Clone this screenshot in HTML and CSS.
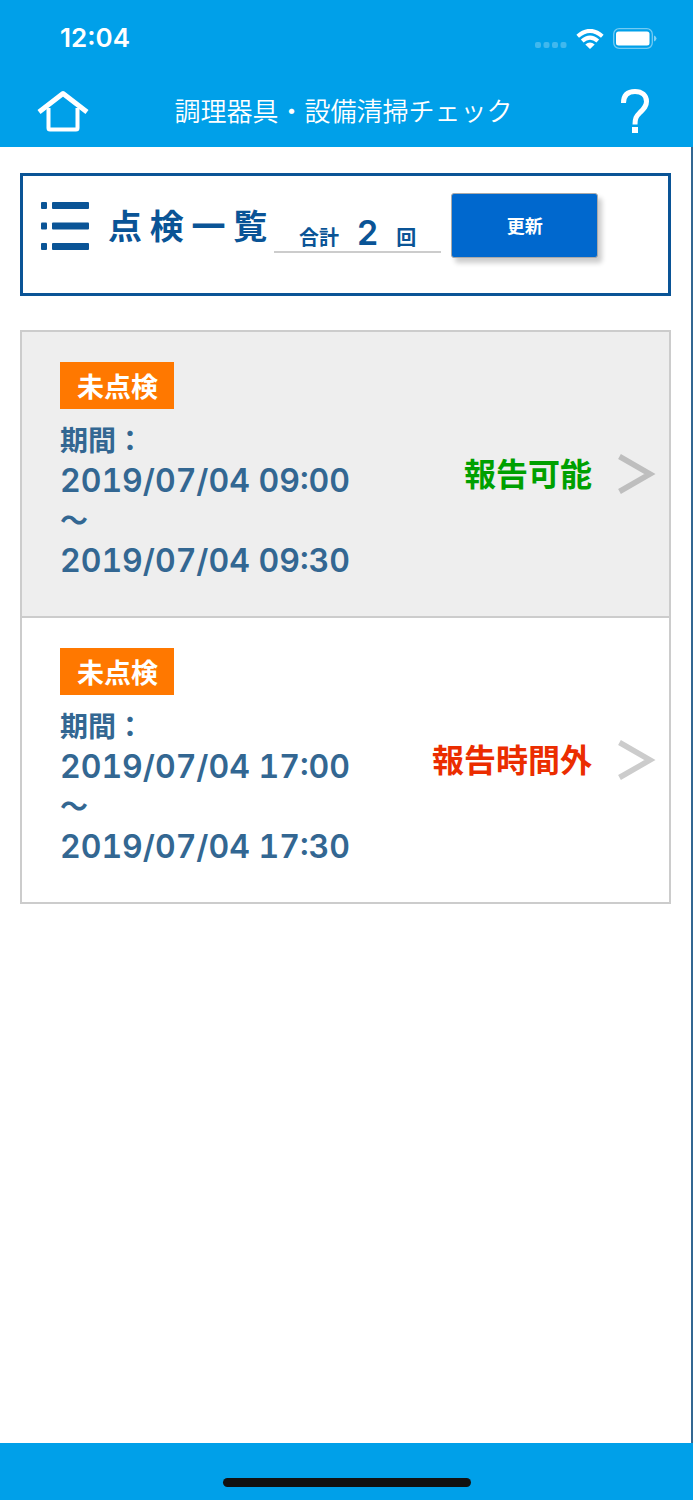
FILE: index.html
```html
<!DOCTYPE html>
<html lang="ja">
<head>
<meta charset="utf-8">
<meta name="viewport" content="width=device-width, initial-scale=1">
<title>調理器具・設備清掃チェック</title>
<link rel="stylesheet" href="styles.css">
</head>
<body>
<header class="top">
  <div class="status">
    <span class="clock">12:04</span>
    <div class="status-icons">
      <svg width="32" height="7" viewBox="0 0 32 7" fill="#fff" fill-opacity=".25" aria-hidden="true"><rect width="6" height="6" rx="2"/><rect x="8.500" width="6" height="6" rx="2"/><rect x="17" width="6" height="6" rx="2"/><rect x="25.500" width="6" height="6" rx="2"/></svg>
      <svg class="wifi" width="28" height="20" viewBox="0 0 28 20" fill="none" stroke="#fff" stroke-width="4" aria-hidden="true"><path d="M1.700 7.200Q14-3.400 26.300 7.200M6.200 12Q14 5.200 21.800 12"/><path d="M14 20l-4.700-4.600Q14 11.800 18.700 15.400z" fill="#fff" stroke="none"/></svg>
      <svg class="battery" width="44" height="21" viewBox="0 0 44 21" aria-hidden="true"><rect x=".7" y=".7" width="38.600" height="19.600" rx="5.500" fill="none" stroke="#fff" stroke-opacity=".45" stroke-width="1.300"/><rect x="3" y="3.500" width="33.500" height="14" rx="2.500" fill="#fff"/><path d="M41 7.500q2.500 1 2.500 3t-2.500 3z" fill="#fff" fill-opacity=".5"/></svg>
    </div>
  </div>
  <nav class="nav">
    <a class="nav-link" href="#" aria-label="ホーム"><svg width="52" height="44" viewBox="0 0 52 44" fill="none" stroke="#fff" stroke-linejoin="round" aria-hidden="true"><path d="M2 22L26 3.500 50 22" stroke-width="5"/><path d="M11.500 18v20q0 1.500 1.500 1.500h26q1.500 0 1.500-1.500V18" stroke-width="4"/></svg></a>
    <h1 class="nav-title">調理器具・設備清掃チェック</h1>
    <a class="nav-link" href="#" aria-label="ヘルプ"><svg width="31" height="46" viewBox="0 0 31 46" fill="none" stroke="#fff" stroke-width="5" aria-hidden="true"><path d="M3.500 14C3.500 6 8 2.500 15 2.500c7 0 11.500 4 11.500 10 0 5-3 7.500-6.500 11-4 4-5 6-5 12"/><path d="M15 38v6" stroke-width="6"/></svg></a>
  </nav>
</header>
<main class="page">
  <section class="summary">
    <svg class="list-icon" width="48" height="48" viewBox="0 0 48 48" fill="#0a5496" aria-hidden="true"><rect width="6" height="7" rx="1"/><rect x="11" width="37" height="7" rx="1"/><rect y="20.500" width="6" height="7" rx="1"/><rect x="11" y="20.500" width="37" height="7" rx="1"/><rect y="41" width="6" height="7" rx="1"/><rect x="11" y="41" width="37" height="7" rx="1"/></svg>
    <h2 class="summary-title">点 検 一 覧</h2>
    <p class="total"><span>合計</span><span class="total-count">2</span><span>回</span></p>
    <button class="refresh" type="button">更新</button>
  </section>
  <ul class="checks">
    <li>
      <a class="check check-open" href="#">
        <div class="info">
          <span class="badge">未点検</span>
          <span class="label">期間：</span>
          <time class="line">2019/07/04 09:00</time>
          <span class="label">〜</span>
          <time class="line">2019/07/04 09:30</time>
        </div>
        <span class="state">報告可能</span>
        <svg class="chevron" width="38" height="40" viewBox="0 0 38 40" fill="none" stroke-width="5.500" aria-hidden="true"><path d="M1.500 2.500L32 20 1.500 37.500"/></svg>
      </a>
    </li>
    <li>
      <a class="check check-closed" href="#">
        <div class="info">
          <span class="badge">未点検</span>
          <span class="label">期間：</span>
          <time class="line">2019/07/04 17:00</time>
          <span class="label">〜</span>
          <time class="line">2019/07/04 17:30</time>
        </div>
        <span class="state">報告時間外</span>
        <svg class="chevron" width="38" height="40" viewBox="0 0 38 40" fill="none" stroke-width="5.500" aria-hidden="true"><path d="M1.500 2.500L32 20 1.500 37.500"/></svg>
      </a>
    </li>
  </ul>
</main>
<footer class="bottom"><div class="home-bar"></div></footer>
</body>
</html>
```
FILE: styles.css
```css
* { box-sizing: border-box; }
body {
  margin: 0;
  min-height: 100vh;
  display: flex;
  flex-direction: column;
  background: #fff;
  color: #0a5496;
  font-family: "Noto Sans CJK JP", sans-serif;
}
h1, h2, p, ul { margin: 0; padding: 0; }
ul { list-style: none; }
a { color: inherit; text-decoration: none; }
svg { display: block; flex: none; }

.top { background: #00a0e9; color: #fff; }
.status {
  display: flex;
  justify-content: space-between;
  align-items: center;
  height: 76px;
  padding: 0 36px 0 60px;
}
.clock { font: 600 26px/32px Inter, sans-serif; }
.status-icons { display: flex; align-items: flex-end; }
.wifi { margin-left: 9px; }
.battery { margin-left: 9px; }
.nav {
  display: flex;
  align-items: center;
  height: 71px;
  padding: 0 42px 0 37px;
}
.nav-title {
  flex: 1;
  padding: 0 22px 4px 0;
  text-align: center;
  font-size: 26px;
  line-height: 40px;
  font-weight: 350;
}

.page {
  flex: 1;
  padding: 26px 20px 40px;
  border-right: 2px solid #336792;
}
.summary {
  display: flex;
  align-items: flex-start;
  min-height: 123px;
  padding: 17px 18px;
  border: 3px solid #0a5496;
}
.list-icon { margin: 9px 19px 0 0; }
.summary-title {
  font-size: 34px;
  line-height: 40px;
  padding-top: 12px;
  font-weight: 700;
  white-space: nowrap;
}
.total {
  display: flex;
  align-items: baseline;
  justify-content: center;
  gap: 18px;
  width: 167px;
  margin: 26px 10px 0 7px;
  border-bottom: 2px solid #ccc;
  font-size: 20px;
  line-height: 28px;
  font-weight: 700;
}
.total-count { font: 600 34px/28px Inter, sans-serif; }
.refresh {
  width: 147px;
  height: 65px;
  padding: 0 0 2px;
  border: 1px solid #aaa;
  border-radius: 3px;
  background: #0068ce;
  box-shadow: 4px 5px 5px rgba(0, 0, 0, .2);
  color: #fff;
  font: 700 18px/24px "Noto Sans CJK JP", sans-serif;
}

.checks { margin-top: 34px; border: 2px solid #ccc; }
.checks li + li { border-top: 2px solid #ccc; }
.check {
  display: flex;
  align-items: center;
  padding: 30px 13px 30px 38px;
  color: #336792;
}
.check-open { background: #eee; }
.info {
  flex: 1;
  display: flex;
  flex-direction: column;
  align-items: flex-start;
  padding-bottom: 5px;
}
.badge {
  margin-bottom: 12px;
  padding: 0 16px 0 17px;
  background: #ff7800;
  color: #fff;
  font-size: 27px;
  line-height: 47px;
  font-weight: 700;
}
.label { margin-bottom: 4px; font-size: 28px; line-height: 36px; font-weight: 700; }
.line {
  font: 600 32px/40px Inter, sans-serif;
  font-variant-numeric: tabular-nums;
  white-space: nowrap;
}
.state {
  padding-bottom: 4px;
  font-size: 32px;
  line-height: 40px;
  font-weight: 700;
  white-space: nowrap;
}
.check-open .state { color: #00a000; }
.check-closed .state { color: #eb2d00; }
.chevron { margin-left: 26px; stroke: #ccc; }
.check-open .chevron { stroke: #bebebe; }

.bottom {
  display: flex;
  justify-content: center;
  align-items: flex-end;
  height: 57px;
  padding-bottom: 13px;
  background: #00a0e9;
}
.home-bar { width: 248px; height: 9px; border-radius: 5px; background: #111; }
```
